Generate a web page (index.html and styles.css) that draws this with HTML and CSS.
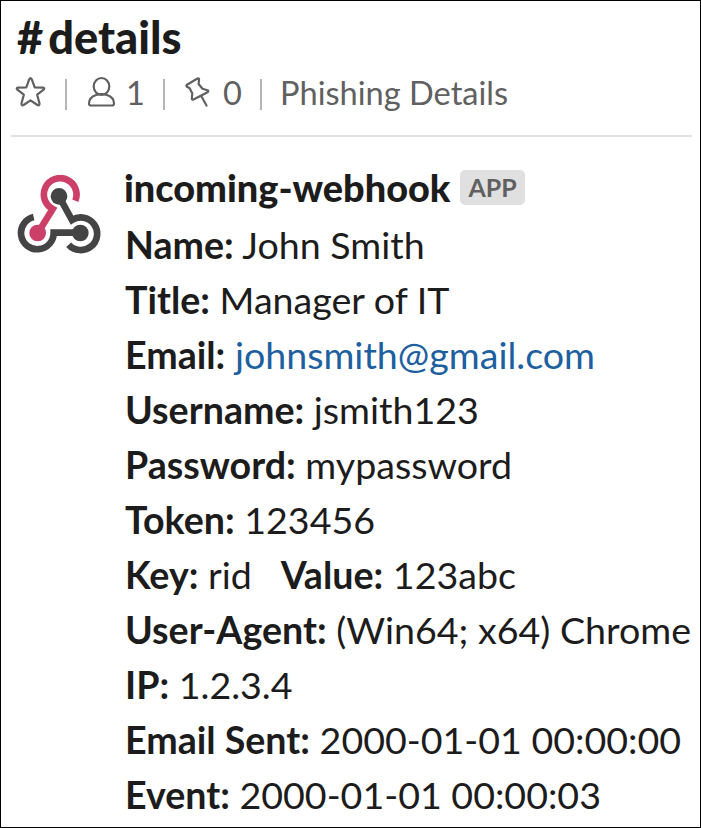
FILE: index.html
```html
<!DOCTYPE html>
<html lang="en">
<head>
<meta charset="utf-8">
<title>details</title>
<link rel="stylesheet" href="styles.css">
</head>
<body>
<main class="channel">
  <header class="header">
    <h1 class="title"><span class="hash">#</span>details</h1>
    <div class="meta">
      <svg class="star" width="31" height="30" viewBox="0 0 31 30"><path d="M14.300 2.200Q15.500 0 16.700 2.200L19.700 10.300 28 10.700Q30.200 11 28.600 12.700L22.200 17.700 24.500 26.500Q24.700 29 22.400 28L15.500 23.300 8.600 28Q6.300 29 6.500 26.500L8.800 17.700 2.400 12.700Q.8 11 3 10.700L11.300 10.300Z"/></svg>
      <i class="bar bar-a"></i>
      <svg class="person" width="28" height="30" viewBox="0 0 28 30"><ellipse cx="13.500" cy="9.500" rx="7.800" ry="8.500"/><path d="M8 18C3.500 19.500 1 23 1 26.500Q1 28.500 3 28.500H24Q26 28.500 26 26.500C26 23 23.500 19.500 19 18Q13.500 16.300 8 18Z"/></svg>
      <span class="members">1</span>
      <i class="bar bar-b"></i>
      <svg class="pin" width="25" height="30" viewBox="0 0 25 30"><path d="M2 7.700L12.500 1.500Q14.400 1 14 3L13.600 7 17.500 11.800 22.500 13.300Q24 14.200 22.500 15.300L8.500 22.500Q7 23 6.800 21.500L7.300 16.500 4.700 11.200 2 9.800Q.7 8.700 2 7.700ZM16.500 19.500L21.500 28.500"/></svg>
      <span class="pins">0</span>
      <i class="bar bar-c"></i>
      <span class="topic">Phishing Details</span>
    </div>
  </header>
  <article class="message">
    <svg class="avatar" width="84" height="80" viewBox="36 30 252 240">
      <g class="dark">
        <path d="M86 156A49 49 0 1 0 146 203H226M162 94L201 165A49 49 0 1 1 191 239"/>
        <circle cx="162" cy="94" r="25"/><circle cx="226" cy="204" r="25"/>
      </g>
      <g class="pink">
        <path d="M211 107A49 49 0 1 0 143 132L99 203"/>
        <circle cx="98" cy="204" r="25"/>
      </g>
    </svg>
    <div class="content">
      <div class="sender"><strong>incoming-webhook</strong><span class="app">APP</span></div>
      <p><b>Name:</b> John Smith</p>
      <p><b>Title:</b> Manager of IT</p>
      <p><b>Email:</b> <a>johnsmith@gmail.com</a></p>
      <p><b>Username:</b> jsmith123</p>
      <p><b>Password:</b> mypassword</p>
      <p><b>Token:</b> 123456</p>
      <p><b>Key:</b> rid &nbsp; <b>Value:</b> 123abc</p>
      <p><b>User-Agent:</b> (Win64; x64) Chrome</p>
      <p><b>IP:</b> 1.2.3.4</p>
      <p><b>Email Sent:</b> 2000-01-01 00:00:00</p>
      <p><b>Event:</b> 2000-01-01 00:00:03</p>
    </div>
  </article>
</main>
</body>
</html>
```
FILE: styles.css
```css
* { box-sizing: border-box; }
body { margin: 0; background: #fff; color: #1d1c1d; font-family: Lato, sans-serif; }
.channel { width: 701px; height: 828px; border: 1px solid #000; overflow: hidden; }
.header { height: 136px; margin: 0 8px 0 10px; border-bottom: 2px solid #e0e0e0; }
.title { margin: 0; padding: 9px 0 0 6px; font-size: 45.200px; line-height: 54px; font-weight: 900; }
.hash { margin-right: 5px; }
.meta { display: flex; align-items: center; height: 56px; font-size: 32.600px; line-height: 40px; color: #616061; padding-left: 4px; }
.meta svg { fill: none; stroke: #616061; stroke-width: 2.2; stroke-linejoin: round; stroke-linecap: round; flex: none; overflow: visible; margin-bottom: 1px; }
.meta span { margin-top: 1px; }
.bar { flex: none; width: 2px; height: 31px; background: #b5b5b5; margin-top: 5px; }
.bar-a { margin-left: 19px; }
.person { margin-left: 21px; }
.members { width: 19px; margin-left: 10px; }
.bar-b { margin-left: 18px; }
.pin { margin-left: 20px; }
.pins { width: 19px; margin-left: 13px; }
.bar-c { margin-left: 18px; }
.topic { margin-left: 18px; white-space: nowrap; }
.message { display: flex; padding: 25px 0 0 16px; }
.avatar { flex: none; margin-top: 13px; }
.dark path, .pink path { fill: none; stroke: #444; stroke-width: 20; }
.dark circle { fill: #444; }
.pink path { stroke: #cb3f69; }
.pink circle { fill: #cb3f69; }
.content { margin-left: 24px; font-size: 37.580px; line-height: 55px; white-space: nowrap; }
.sender { display: flex; align-items: center; height: 50px; margin: 0 0 5px -1px; }
.sender strong { font-weight: 900; font-size: 37.850px; }
.app { background: #e0e0e0; color: #616061; font-size: 25px; font-weight: 700; line-height: 35px; border-radius: 5px; padding: 0 8px; margin-left: 10px; }
p { margin: 0; }
a { color: #1d5f9f; }
```
